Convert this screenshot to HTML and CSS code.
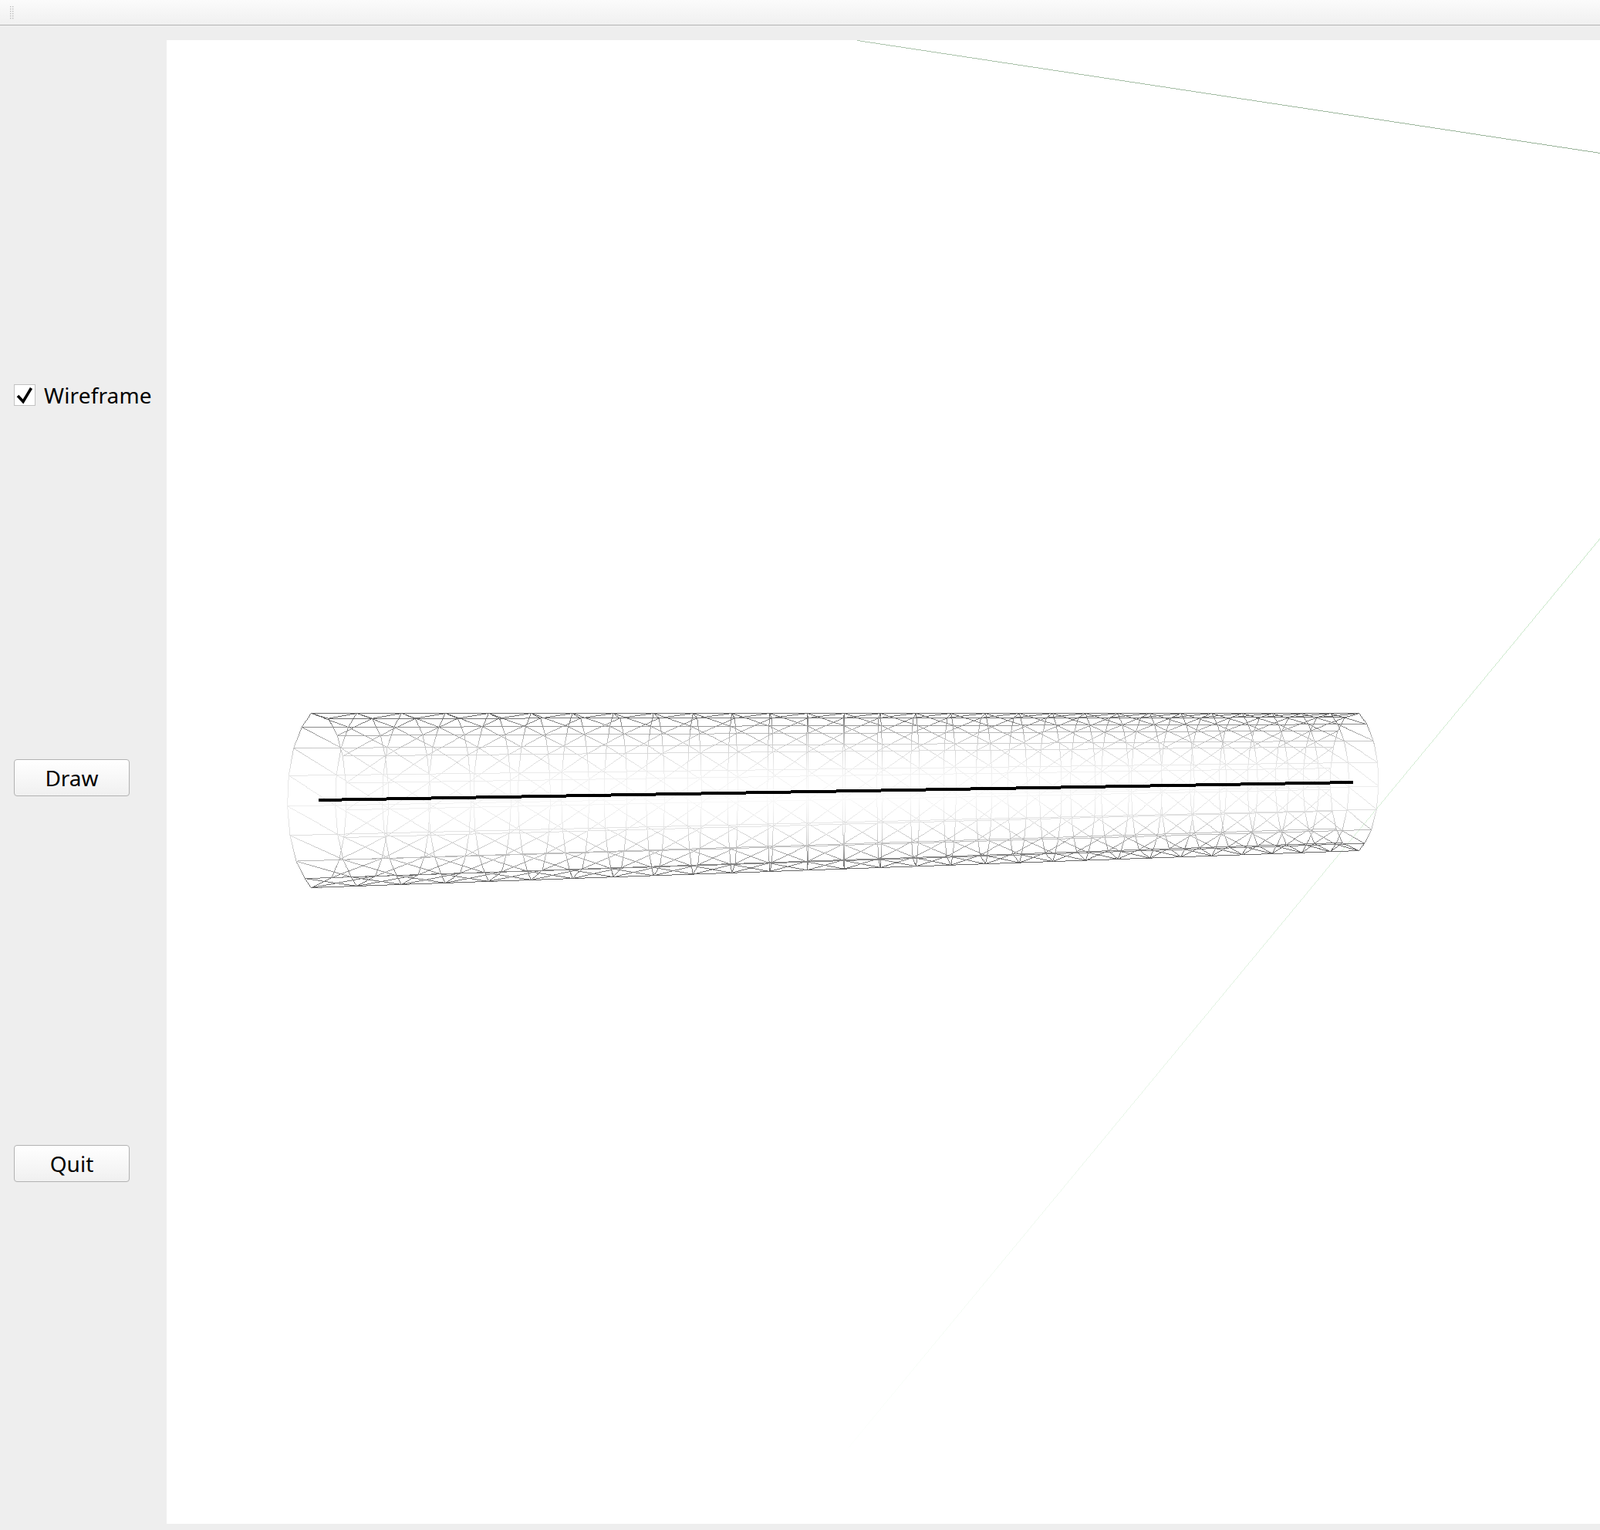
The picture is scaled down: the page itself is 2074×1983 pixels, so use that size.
FILE: index.html
```html
<!DOCTYPE html>
<html lang="en">
<head>
<meta charset="utf-8">
<title>Wireframe</title>
<link rel="stylesheet" href="styles.css">
</head>
<body>
<div class="toolbar">
  <svg class="grip" width="5" height="18" viewBox="0 0 5 18">
    <defs><pattern id="dots" width="3" height="3" patternUnits="userSpaceOnUse"><rect width="1.4" height="1.4" fill="#bdbdbd"/></pattern></defs>
    <rect width="5" height="18" fill="url(#dots)"/>
  </svg>
</div>
<div class="main">
  <div class="sidebar">
    <label class="check-row">
      <span class="checkbox">
        <svg width="26" height="26" viewBox="0 0 26 26"><path class="tick" d="M4 14 L11 21.5 L21.5 4"/></svg>
      </span>
      <span class="check-label">Wireframe</span>
    </label>
    <button class="btn" type="button">Draw</button>
    <button class="btn" type="button">Quit</button>
  </div>
  <div class="view">
    <canvas id="gl" class="gl"></canvas>
  </div>
</div>
<script src="script.js"></script>
</body>
</html>
```

FILE: styles.css
```css
* { box-sizing: border-box; }
html, body { margin: 0; padding: 0; height: 100%; overflow: hidden; }
body {
  background: #eeeeee;
  font-family: "Noto Sans", "Open Sans", sans-serif;
  color: #000;
  display: flex;
  flex-direction: column;
}
.toolbar {
  height: 33px;
  flex: none;
  background: linear-gradient(#fbfbfb, #f0f0f0);
  border-bottom: 1px solid #b4b4b4;
  padding: 8px 0 0 13px;
}
.grip { display: block; }
.main { flex: 1; display: flex; min-height: 0; }
.sidebar {
  width: 216px;
  flex: none;
  padding: 459px 0 0 18px;
  display: flex;
  flex-direction: column;
  align-items: flex-start;
  gap: 452px;
}
.check-row {
  display: flex;
  align-items: center;
  height: 40px;
  gap: 11px;
  font-size: 28px;
}
.checkbox {
  width: 28px;
  height: 28px;
  background: #fff;
  border: 1px solid #c2c2c2;
  display: block;
}
.checkbox svg { display: block; }
.tick { fill: none; stroke: #000; stroke-width: 3.6; }
.check-label { line-height: 28px; white-space: nowrap; letter-spacing: 0.15px; }
.btn {
  width: 150px;
  height: 48px;
  padding: 0;
  border: 1px solid #b2b2b2;
  border-radius: 4px;
  background: linear-gradient(#ffffff, #f0f0f0);
  font-family: inherit;
  font-size: 28px;
  color: #000;
}
.view { flex: 1; min-width: 0; padding: 19px 0 8px; }
.gl { display: block; width: 100%; height: 100%; background: #fff; }
```

FILE: script.js
```js
(function () {
  var canvas = document.getElementById('gl');
  var box = canvas.getBoundingClientRect();
  var W = canvas.width = Math.round(box.width);
  var H = canvas.height = Math.round(box.height);
  var OX = Math.round(box.left), OY = Math.round(box.top);
  var ctx = canvas.getContext('2d');
  var img = ctx.createImageData(W, H);
  var d = img.data;
  for (var p = 0; p < d.length; p++) d[p] = 255;

  function plot(x, y, r, g, b) {
    x = Math.round(x) - OX; y = Math.round(y) - OY;
    if (x < 0 || y < 0 || x >= W || y >= H) return;
    var o = (y * W + x) * 4;
    if (r + g + b < d[o] + d[o + 1] + d[o + 2]) { d[o] = r; d[o + 1] = g; d[o + 2] = b; }
  }
  function line(x0, y0, c0, x1, y1, c1, thick) {
    var n = Math.ceil(Math.max(Math.abs(x1 - x0), Math.abs(y1 - y0))) || 1;
    for (var i = 0; i <= n; i++) {
      var t = i / n;
      var r = c0[0] + (c1[0] - c0[0]) * t;
      var g = c0[1] + (c1[1] - c0[1]) * t;
      var b = c0[2] + (c1[2] - c0[2]) * t;
      var x = x0 + (x1 - x0) * t, y = y0 + (y1 - y0) * t;
      for (var k = 0; k < (thick || 1); k++) plot(x, y + k, r, g, b);
    }
  }

  // cylinder, measured from the picture
  var N = 29, RATIO = 113 / 89, XC = 1070, K = 0.0624;
  var L = { x: 413, y: 1037 }, R = { x: 1753, y: 1013 };
  var NEAR = [-1, -0.84, -0.60, -0.285, 0.065, 0.40, 0.695, 0.895, 1];
  var BACK = [-1, -0.94, -0.745, -0.51, -0.20, 0.108, 0.425, 0.68, 0.885, 1];
  var TABLE = [[0, 0], [0.27, 0.11], [0.5, 0.22], [0.75, 0.46], [0.88, 0.76], [1, 1]];

  function shade(v) {
    v = Math.min(1, v);
    for (var i = 1; i < TABLE.length; i++) {
      if (v <= TABLE[i][0]) {
        var a = TABLE[i - 1], b = TABLE[i];
        return a[1] + (b[1] - a[1]) * (v - a[0]) / (b[0] - a[0]);
      }
    }
    return 1;
  }
  function vertex(t, f, side) {
    var w = 1 + (RATIO - 1) * t;
    var cx = ((1 - t) * L.x + t * RATIO * R.x) / w;
    var cy = ((1 - t) * L.y + t * RATIO * R.y) / w;
    var ry = 113 / w;
    var a = K * (cx - XC) / w;
    var s = Math.sqrt(Math.max(0, 1 - f * f));
    var x = Math.abs(f) === 1 ? cx + a * 0.25 : cx + (side > 0 ? a : -0.87 * a) * s;
    var y = cy + ry * f;
    var g = Math.abs(cx - XC) / 680 * 0.3;
    var v = 255 - 153 * shade(Math.sqrt(f * f + g * g));
    return { x: x, y: y, c: [v, v, v] };
  }
  function seg(a, b) { line(a.x, a.y, a.c, b.x, b.y, b.c, 1); }

  line(1111, 52, [172, 196, 172], 2074, 198, [152, 178, 152], 1);
  line(2074, 697, [198, 230, 198], 1100, 1875, [252, 255, 252], 1);

  function strip(list, side, diagDown) {
    for (var i = 0; i <= N; i++) {
      var t = i / N, t2 = (i + 1) / N;
      for (var k = 0; k < list.length; k++) {
        var v = vertex(t, list[k], side);
        if (k + 1 < list.length) seg(v, vertex(t, list[k + 1], side));
        if (i < N) {
          seg(v, vertex(t2, list[k], side));
          if (k + 1 < list.length) {
            if (diagDown) seg(v, vertex(t2, list[k + 1], side));
            else seg(vertex(t2, list[k], side), vertex(t, list[k + 1], side));
          }
        }
      }
    }
  }
  strip(BACK, -1, false);
  strip(NEAR, 1, true);

  line(L.x, L.y - 2, [0, 0, 0], R.x, R.y - 1, [0, 0, 0], 4);

  ctx.putImageData(img, 0, 0);
})();
```
